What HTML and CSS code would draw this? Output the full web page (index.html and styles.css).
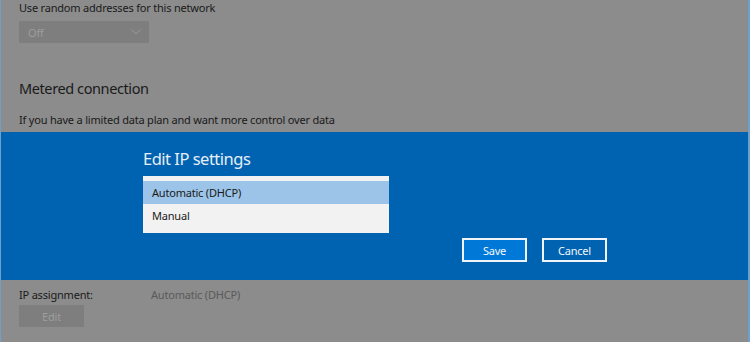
FILE: index.html
```html
<!DOCTYPE html>
<html>
<head>
<meta charset="utf-8">
<link rel="stylesheet" href="styles.css">
</head>
<body>
<div class="window">
  <div class="page">
    <div class="label">Use random addresses for this network</div>
    <div class="select-off"><span>Off</span>
      <svg class="chev" width="10" height="6" viewBox="0 0 10 6"><path d="M0.5 0.5 L5 5 L9.5 0.5" fill="none" stroke="#9a9a9a" stroke-width="1"/></svg>
    </div>
    <h2 class="heading">Metered connection</h2>
    <p class="para">If you have a limited data plan and want more control over data<br>usage, make this connection a metered network. Some apps might</p>
    <div class="ip-row">
      <span class="ip-label">IP assignment:</span>
      <span class="ip-value">Automatic (DHCP)</span>
    </div>
    <div class="edit-btn">Edit</div>
  </div>

  <div class="overlay">
    <div class="dialog">
      <div class="dialog-title">Edit IP settings</div>
      <div class="list">
        <div class="item selected">Automatic (DHCP)</div>
        <div class="item">Manual</div>
      </div>
      <div class="actions">
        <button class="btn primary">Save</button>
        <button class="btn">Cancel</button>
      </div>
    </div>
  </div>
</div>
</body>
</html>
```

FILE: styles.css
```css
html, body {
  margin: 0;
  padding: 0;
  width: 750px;
  height: 342px;
  overflow: hidden;
  background: #8c8c8c;
}
.window {
  position: relative;
  width: 750px;
  height: 342px;
  box-sizing: border-box;
  border-left: 1px solid #6f9fcc;
  border-right: 2px solid #6f9fcc;
  font-family: "Noto Sans", "Liberation Sans", sans-serif;
  color: #1a1a1a;
  font-size: 11px;
  letter-spacing: -0.2px;
}
.page {
  padding: 0 0 0 18px;
  display: flex;
  flex-direction: column;
  align-items: flex-start;
}
.label {
  line-height: 16px;
  margin-top: 0;
}
.select-off {
  margin-top: 5px;
  width: 130px;
  height: 22px;
  box-sizing: border-box;
  background: #7e7e7e;
  color: #9d9d9d;
  display: flex;
  align-items: center;
  justify-content: space-between;
  padding: 0 8px 0 9px;
}
.heading {
  font-weight: normal;
  font-size: 14.5px;
  letter-spacing: -0.4px;
  margin: 35px 0 0 0;
  line-height: 20px;
  color: #1a1a1a;
}
.para {
  margin: 13px 0 0 0;
  line-height: 18px;
  height: 22px;
  overflow: hidden;
}
.ip-row {
  display: flex;
  line-height: 16px;
  margin-top: 154px;
}
.ip-label {
  width: 132px;
}
.ip-value {
  color: #5a5a5a;
}
.edit-btn {
  margin-top: 2px;
  width: 65px;
  height: 22px;
  background: #7e7e7e;
  color: #9d9d9d;
  display: flex;
  align-items: center;
  justify-content: center;
}
.overlay {
  position: absolute;
  left: 0;
  right: 0;
  top: 132px;
  height: 148px;
  background: #0063b1;
}
.dialog {
  padding: 16px 0 0 142px;
  display: flex;
  flex-direction: column;
  align-items: flex-start;
}
.dialog-title {
  color: #e6eef7;
  font-size: 16.5px;
  letter-spacing: -0.5px;
  line-height: 22px;
}
.list {
  margin-top: 6px;
  width: 246px;
  background: #f2f2f2;
  padding: 5px 0 5px 0;
  box-sizing: border-box;
}
.item {
  height: 23px;
  line-height: 23px;
  padding-left: 9px;
  color: #1a1a1a;
}
.item + .item {
  height: 24px;
  line-height: 24px;
}
.item.selected {
  background: #9cc4e8;
}
.actions {
  margin: 5px 0 0 319px;
  display: flex;
  gap: 15px;
}
.btn {
  width: 65px;
  height: 24px;
  border: 2px solid #f0f4f8;
  background: #0063b1;
  color: #f4f8fc;
  font-family: "Noto Sans", "Liberation Sans", sans-serif;
  font-size: 11px;
  letter-spacing: -0.2px;
  padding: 0;
  box-sizing: border-box;
}
.btn.primary {
  background: #0078d7;
}
```
